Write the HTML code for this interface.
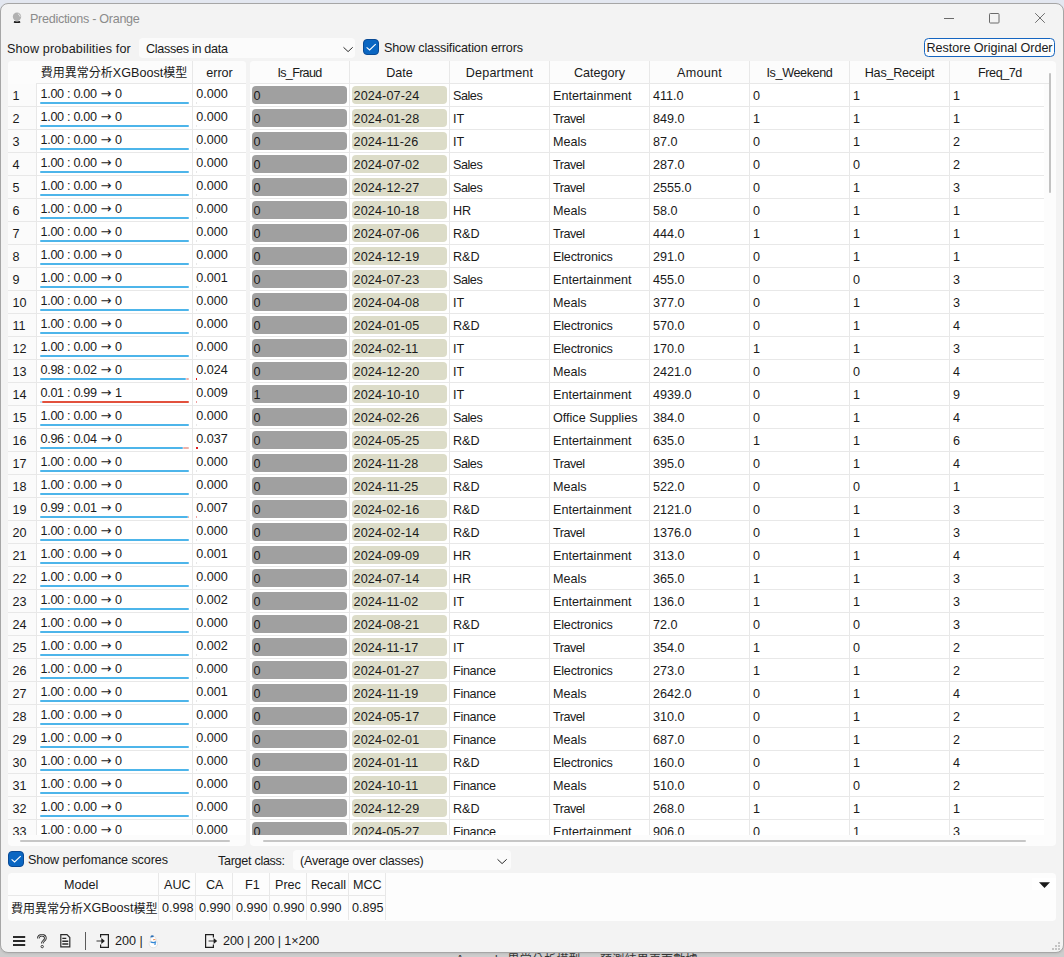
<!DOCTYPE html>
<html lang="zh-Hant"><head><meta charset="utf-8"><title>Predictions - Orange</title>
<style>
html,body{margin:0;padding:0}
body{width:1064px;height:957px;overflow:hidden;position:relative;background:#e3e7f0;
 font-family:"Liberation Sans","Noto Sans CJK TC",sans-serif;font-size:12.6px;color:#1a1a1a}
*{box-sizing:border-box}
span,div,i,b,em{white-space:nowrap}
i,b,em{font-style:normal;font-weight:normal}
.backdrop{position:absolute;left:0;top:940px;width:1064px;height:17px;background:#cdcdcd}
.win{position:absolute;left:0;top:3px;width:1064px;height:950px;background:#f3f3f3;border:1px solid #a6a6a6;border-radius:8px;box-shadow:0 1px 2px rgba(0,0,0,.08)}
.abs{position:absolute}
.title{position:absolute;left:30px;top:12px;color:#8b8b8b;font-size:12.6px;letter-spacing:-.3px;line-height:14px}
.lbl{position:absolute;line-height:14px}
.combo{position:absolute;background:#fbfbfb;border-radius:4px;height:20px}
.cb{position:absolute;width:16px;height:16px;border-radius:4px;background:#0a66c2;border:1px solid #0a4a94}
.btn{position:absolute;left:924px;top:38px;width:131px;height:19px;border:1.5px solid #1565c0;border-radius:4.5px;background:#fdfdfd}
/* tables */
.ltable{position:absolute;left:8px;top:61px;width:238px;height:785px;background:#fcfcfc;border-radius:4px;overflow:hidden}
.rtable{position:absolute;left:250px;top:61px;width:806px;height:785px;background:#fcfcfc;border-radius:4px;overflow:hidden}
.lh{position:absolute;top:0;height:23px;border-right:1px solid #e8e8e8;border-bottom:1px solid #e8e8e8;background:#fcfcfc}
.lh span.hmodel,.lh span.herr{position:absolute;top:4.6px;line-height:14px;left:0;right:0;text-align:center}
.lr{position:absolute;left:0;width:238px;height:23px;border-bottom:1px solid #e8e8e8;background:#fbfbfb}
.idx{position:absolute;left:4.5px;top:4.6px;line-height:14px}
.pred{position:absolute;left:28px;top:0;width:157px;height:22px;padding:2.9px 0 0 3.5px;line-height:14px;background:#fff;border-left:1px solid #e8e8e8;border-right:1px solid #e8e8e8;letter-spacing:-.3px}
.err{position:absolute;left:185px;top:0;width:53px;height:22px;padding:2.9px 0 0 3.2px;line-height:14px;background:#fff}
.b0{position:absolute;left:32px;top:18px;height:2px;background:#4db5ea;border-radius:1px;z-index:2}
.b1{position:absolute;top:18px;height:2px;background:#e2513d;border-radius:1px;z-index:2}
.b0.fd{background:#a9d9f3}.b1.fd{background:#ecb1a8}
.eb{position:absolute;left:188px;top:18px;height:2px;background:#e02020;z-index:2}
.rh{position:absolute;top:0;width:100px;height:23px;border-right:1px solid #e8e8e8;border-bottom:1px solid #e8e8e8;text-align:center;line-height:14px;padding-top:4.6px;background:#fcfcfc}
.rr{position:absolute;left:0;width:794px;height:23px;border-bottom:1px solid #e8e8e8;background:#fff}
.c{position:absolute;top:0;width:100px;height:22px;border-right:1px solid #e8e8e8;line-height:14px}
.c0{left:0}.c1{left:100px}.c2{left:200px}.c3{left:300px}.c4{left:400px}.c5{left:500px}.c6{left:600px}.c7{left:700px;width:94px;border-right:none}
.c em{position:absolute;left:3px;top:4.6px}
.pill{position:absolute;left:2px;top:2px;width:95px;height:18px;border-radius:4px;padding:2.6px 0 0 1.5px;line-height:14px}
.pill.g{background:#a0a0a0}
.pill.d{background:#dcdcc8;letter-spacing:.14px}
.hsb{position:absolute;height:2px;background:#c6c6c6;border-radius:1px}
/* bottom */
.score{position:absolute;left:8px;top:873px;width:1048px;height:48px;background:#fdfdfd;border-radius:4px}
.sh{position:absolute;top:0;height:47px;border-right:1px solid #e8e8e8}
.sline{position:absolute;left:0;top:22px;height:1px;background:#e8e8e8;width:378px}
.st{position:absolute;line-height:14px}

.cj{font-size:12px;position:relative;top:.9px}
.ar{font-family:"DejaVu Sans",sans-serif;font-size:13px;line-height:10px;margin:0 .6px}
.clip{position:absolute;left:0;top:0;height:774px;overflow:hidden}

</style></head>
<body>
<div class="backdrop"></div>
<div class="win"></div>
<!-- title bar -->
<svg class="abs" style="left:12px;top:12px" width="12" height="12" viewBox="0 0 12 12"><circle cx="5" cy="4.7" r="4.2" fill="#b1b1b1"/><path d="M6.3 2.1c1 .4 1.6 1.2 1.8 2.2" fill="none" stroke="#f4f4f4" stroke-width=".9" stroke-linecap="round"/><path d="M2.2 9c1.8.5 3.8.5 5.700 0l.5 1.500c-.4.700-6.400.700-6.700 0z" fill="#1c1c1c"/></svg>
<span class="title">Predictions - Orange</span>
<svg class="abs" style="left:940px;top:8px" width="112" height="20" viewBox="0 0 112 20" fill="none" stroke="#6a6a6a" stroke-width="1"><path d="M4 10.5h10"/><rect x="49.5" y="5.5" width="9.5" height="9.5" rx=".8"/><path d="M95.2 5.200l9.600 9.600M104.800 5.200l-9.600 9.600" stroke="#707070"/></svg>
<!-- toolbar -->
<span class="lbl" style="left:7px;top:42px;letter-spacing:.16px">Show probabilities for</span>
<div class="combo" style="left:139px;top:38px;width:216px"></div>
<span class="lbl" style="left:146px;top:42px;letter-spacing:-.3px">Classes in data</span>
<svg class="abs" style="left:342px;top:45px" width="13" height="9" viewBox="0 0 13 9" fill="none" stroke="#2a2a2a" stroke-width="1"><path d="M1.5 2.3l4.6 4.3 4.6-4.3"/></svg>
<div class="cb" style="left:363px;top:39px"></div>
<svg class="abs" style="left:363px;top:39px" width="16" height="16" viewBox="0 0 16 16" fill="none" stroke="#fff" stroke-width="1.1"><path d="M3.6 8.3l3 2.7 6.1-5.9"/></svg>
<span class="lbl" style="left:384px;top:40.8px;letter-spacing:-.15px">Show classification errors</span>
<div class="btn"></div>
<span class="lbl" style="left:926.5px;top:41px;letter-spacing:-.03px">Restore Original Order</span>
<div class="ltable"><div class="clip" style="width:238px">
<div class="lh" style="left:0;width:28px;border:none"></div><div class="lh" style="left:28px;width:157px"><span class="hmodel"><span class="cj">費用異常分析</span>XGBoost<span class="cj">模型</span></span></div><div class="lh" style="left:185px;width:53px;border-right:none"><span class="herr">error</span></div>
<div class="lr" style="top:23px"><span class="idx">1</span><span class="pred">1.00 : 0.00 <span class="ar">→</span> 0</span><i class="b0" style="width:149px"></i><span class="err">0.000</span><i class="eb" style="width:1px;background:#e8e8e8"></i></div>
<div class="lr" style="top:46px"><span class="idx">2</span><span class="pred">1.00 : 0.00 <span class="ar">→</span> 0</span><i class="b0" style="width:149px"></i><span class="err">0.000</span><i class="eb" style="width:1px;background:#e8e8e8"></i></div>
<div class="lr" style="top:69px"><span class="idx">3</span><span class="pred">1.00 : 0.00 <span class="ar">→</span> 0</span><i class="b0" style="width:149px"></i><span class="err">0.000</span><i class="eb" style="width:1px;background:#e8e8e8"></i></div>
<div class="lr" style="top:92px"><span class="idx">4</span><span class="pred">1.00 : 0.00 <span class="ar">→</span> 0</span><i class="b0" style="width:149px"></i><span class="err">0.000</span><i class="eb" style="width:1px;background:#e8e8e8"></i></div>
<div class="lr" style="top:115px"><span class="idx">5</span><span class="pred">1.00 : 0.00 <span class="ar">→</span> 0</span><i class="b0" style="width:149px"></i><span class="err">0.000</span><i class="eb" style="width:1px;background:#e8e8e8"></i></div>
<div class="lr" style="top:138px"><span class="idx">6</span><span class="pred">1.00 : 0.00 <span class="ar">→</span> 0</span><i class="b0" style="width:149px"></i><span class="err">0.000</span><i class="eb" style="width:1px;background:#e8e8e8"></i></div>
<div class="lr" style="top:161px"><span class="idx">7</span><span class="pred">1.00 : 0.00 <span class="ar">→</span> 0</span><i class="b0" style="width:149px"></i><span class="err">0.000</span><i class="eb" style="width:1px;background:#e8e8e8"></i></div>
<div class="lr" style="top:184px"><span class="idx">8</span><span class="pred">1.00 : 0.00 <span class="ar">→</span> 0</span><i class="b0" style="width:149px"></i><span class="err">0.000</span><i class="eb" style="width:1px;background:#e8e8e8"></i></div>
<div class="lr" style="top:207px"><span class="idx">9</span><span class="pred">1.00 : 0.00 <span class="ar">→</span> 0</span><i class="b0" style="width:149px"></i><span class="err">0.001</span><i class="eb" style="width:1px;background:#e8e8e8"></i></div>
<div class="lr" style="top:230px"><span class="idx">10</span><span class="pred">1.00 : 0.00 <span class="ar">→</span> 0</span><i class="b0" style="width:149px"></i><span class="err">0.000</span><i class="eb" style="width:1px;background:#e8e8e8"></i></div>
<div class="lr" style="top:253px"><span class="idx">11</span><span class="pred">1.00 : 0.00 <span class="ar">→</span> 0</span><i class="b0" style="width:149px"></i><span class="err">0.000</span><i class="eb" style="width:1px;background:#e8e8e8"></i></div>
<div class="lr" style="top:276px"><span class="idx">12</span><span class="pred">1.00 : 0.00 <span class="ar">→</span> 0</span><i class="b0" style="width:149px"></i><span class="err">0.000</span><i class="eb" style="width:1px;background:#e8e8e8"></i></div>
<div class="lr" style="top:299px"><span class="idx">13</span><span class="pred">0.98 : 0.02 <span class="ar">→</span> 0</span><i class="b0" style="width:146px"></i><i class="b1 fd" style="left:178px;width:3px"></i><span class="err">0.024</span><i class="eb" style="width:1.2px"></i></div>
<div class="lr" style="top:322px"><span class="idx">14</span><span class="pred">0.01 : 0.99 <span class="ar">→</span> 1</span><i class="b0 fd" style="width:2px"></i><i class="b1" style="left:34px;width:147px"></i><span class="err">0.009</span><i class="eb" style="width:1px;background:#f0a0a0"></i></div>
<div class="lr" style="top:345px"><span class="idx">15</span><span class="pred">1.00 : 0.00 <span class="ar">→</span> 0</span><i class="b0" style="width:149px"></i><span class="err">0.000</span><i class="eb" style="width:1px;background:#e8e8e8"></i></div>
<div class="lr" style="top:368px"><span class="idx">16</span><span class="pred">0.96 : 0.04 <span class="ar">→</span> 0</span><i class="b0" style="width:143px"></i><i class="b1 fd" style="left:175px;width:6px"></i><span class="err">0.037</span><i class="eb" style="width:1.8px"></i></div>
<div class="lr" style="top:391px"><span class="idx">17</span><span class="pred">1.00 : 0.00 <span class="ar">→</span> 0</span><i class="b0" style="width:149px"></i><span class="err">0.000</span><i class="eb" style="width:1px;background:#e8e8e8"></i></div>
<div class="lr" style="top:414px"><span class="idx">18</span><span class="pred">1.00 : 0.00 <span class="ar">→</span> 0</span><i class="b0" style="width:149px"></i><span class="err">0.000</span><i class="eb" style="width:1px;background:#e8e8e8"></i></div>
<div class="lr" style="top:437px"><span class="idx">19</span><span class="pred">0.99 : 0.01 <span class="ar">→</span> 0</span><i class="b0" style="width:148px"></i><i class="b1 fd" style="left:180px;width:1px"></i><span class="err">0.007</span><i class="eb" style="width:1px;background:#f0a0a0"></i></div>
<div class="lr" style="top:460px"><span class="idx">20</span><span class="pred">1.00 : 0.00 <span class="ar">→</span> 0</span><i class="b0" style="width:149px"></i><span class="err">0.000</span><i class="eb" style="width:1px;background:#e8e8e8"></i></div>
<div class="lr" style="top:483px"><span class="idx">21</span><span class="pred">1.00 : 0.00 <span class="ar">→</span> 0</span><i class="b0" style="width:149px"></i><span class="err">0.001</span><i class="eb" style="width:1px;background:#e8e8e8"></i></div>
<div class="lr" style="top:506px"><span class="idx">22</span><span class="pred">1.00 : 0.00 <span class="ar">→</span> 0</span><i class="b0" style="width:149px"></i><span class="err">0.000</span><i class="eb" style="width:1px;background:#e8e8e8"></i></div>
<div class="lr" style="top:529px"><span class="idx">23</span><span class="pred">1.00 : 0.00 <span class="ar">→</span> 0</span><i class="b0" style="width:149px"></i><span class="err">0.002</span><i class="eb" style="width:1px;background:#e8e8e8"></i></div>
<div class="lr" style="top:552px"><span class="idx">24</span><span class="pred">1.00 : 0.00 <span class="ar">→</span> 0</span><i class="b0" style="width:149px"></i><span class="err">0.000</span><i class="eb" style="width:1px;background:#e8e8e8"></i></div>
<div class="lr" style="top:575px"><span class="idx">25</span><span class="pred">1.00 : 0.00 <span class="ar">→</span> 0</span><i class="b0" style="width:149px"></i><span class="err">0.002</span><i class="eb" style="width:1px;background:#e8e8e8"></i></div>
<div class="lr" style="top:598px"><span class="idx">26</span><span class="pred">1.00 : 0.00 <span class="ar">→</span> 0</span><i class="b0" style="width:149px"></i><span class="err">0.000</span><i class="eb" style="width:1px;background:#e8e8e8"></i></div>
<div class="lr" style="top:621px"><span class="idx">27</span><span class="pred">1.00 : 0.00 <span class="ar">→</span> 0</span><i class="b0" style="width:149px"></i><span class="err">0.001</span><i class="eb" style="width:1px;background:#e8e8e8"></i></div>
<div class="lr" style="top:644px"><span class="idx">28</span><span class="pred">1.00 : 0.00 <span class="ar">→</span> 0</span><i class="b0" style="width:149px"></i><span class="err">0.000</span><i class="eb" style="width:1px;background:#e8e8e8"></i></div>
<div class="lr" style="top:667px"><span class="idx">29</span><span class="pred">1.00 : 0.00 <span class="ar">→</span> 0</span><i class="b0" style="width:149px"></i><span class="err">0.000</span><i class="eb" style="width:1px;background:#e8e8e8"></i></div>
<div class="lr" style="top:690px"><span class="idx">30</span><span class="pred">1.00 : 0.00 <span class="ar">→</span> 0</span><i class="b0" style="width:149px"></i><span class="err">0.000</span><i class="eb" style="width:1px;background:#e8e8e8"></i></div>
<div class="lr" style="top:713px"><span class="idx">31</span><span class="pred">1.00 : 0.00 <span class="ar">→</span> 0</span><i class="b0" style="width:149px"></i><span class="err">0.000</span><i class="eb" style="width:1px;background:#e8e8e8"></i></div>
<div class="lr" style="top:736px"><span class="idx">32</span><span class="pred">1.00 : 0.00 <span class="ar">→</span> 0</span><i class="b0" style="width:149px"></i><span class="err">0.000</span><i class="eb" style="width:1px;background:#e8e8e8"></i></div>
<div class="lr" style="top:759px"><span class="idx">33</span><span class="pred">1.00 : 0.00 <span class="ar">→</span> 0</span><i class="b0" style="width:149px"></i><span class="err">0.000</span><i class="eb" style="width:1px;background:#e8e8e8"></i></div>
</div></div>
<div class="rtable"><div class="clip" style="width:806px">
<div class="rh" style="left:0px"><span style="letter-spacing:-0.7px">Is_Fraud</span></div><div class="rh" style="left:100px"><span>Date</span></div><div class="rh" style="left:200px"><span style="letter-spacing:0.16px">Department</span></div><div class="rh" style="left:300px"><span>Category</span></div><div class="rh" style="left:400px"><span style="letter-spacing:0.27px">Amount</span></div><div class="rh" style="left:500px"><span style="letter-spacing:-0.38px">Is_Weekend</span></div><div class="rh" style="left:600px"><span style="letter-spacing:-0.24px">Has_Receipt</span></div><div class="rh" style="left:700px;border-right:none"><span style="letter-spacing:-0.45px">Freq_7d</span></div>
<div class="rr" style="top:23px"><span class="c c0"><b class="pill g">0</b></span><span class="c c1"><b class="pill d">2024-07-24</b></span><span class="c c2"><em style="letter-spacing:-0.45px">Sales</em></span><span class="c c3"><em>Entertainment</em></span><span class="c c4"><em>411.0</em></span><span class="c c5"><em>0</em></span><span class="c c6"><em>1</em></span><span class="c c7"><em>1</em></span></div>
<div class="rr" style="top:46px"><span class="c c0"><b class="pill g">0</b></span><span class="c c1"><b class="pill d">2024-01-28</b></span><span class="c c2"><em>IT</em></span><span class="c c3"><em style="letter-spacing:-0.5px">Travel</em></span><span class="c c4"><em>849.0</em></span><span class="c c5"><em>1</em></span><span class="c c6"><em>1</em></span><span class="c c7"><em>1</em></span></div>
<div class="rr" style="top:69px"><span class="c c0"><b class="pill g">0</b></span><span class="c c1"><b class="pill d">2024-11-26</b></span><span class="c c2"><em>IT</em></span><span class="c c3"><em>Meals</em></span><span class="c c4"><em>87.0</em></span><span class="c c5"><em>0</em></span><span class="c c6"><em>1</em></span><span class="c c7"><em>2</em></span></div>
<div class="rr" style="top:92px"><span class="c c0"><b class="pill g">0</b></span><span class="c c1"><b class="pill d">2024-07-02</b></span><span class="c c2"><em style="letter-spacing:-0.45px">Sales</em></span><span class="c c3"><em style="letter-spacing:-0.5px">Travel</em></span><span class="c c4"><em>287.0</em></span><span class="c c5"><em>0</em></span><span class="c c6"><em>0</em></span><span class="c c7"><em>2</em></span></div>
<div class="rr" style="top:115px"><span class="c c0"><b class="pill g">0</b></span><span class="c c1"><b class="pill d">2024-12-27</b></span><span class="c c2"><em style="letter-spacing:-0.45px">Sales</em></span><span class="c c3"><em style="letter-spacing:-0.5px">Travel</em></span><span class="c c4"><em>2555.0</em></span><span class="c c5"><em>0</em></span><span class="c c6"><em>1</em></span><span class="c c7"><em>3</em></span></div>
<div class="rr" style="top:138px"><span class="c c0"><b class="pill g">0</b></span><span class="c c1"><b class="pill d">2024-10-18</b></span><span class="c c2"><em>HR</em></span><span class="c c3"><em>Meals</em></span><span class="c c4"><em>58.0</em></span><span class="c c5"><em>0</em></span><span class="c c6"><em>1</em></span><span class="c c7"><em>1</em></span></div>
<div class="rr" style="top:161px"><span class="c c0"><b class="pill g">0</b></span><span class="c c1"><b class="pill d">2024-07-06</b></span><span class="c c2"><em>R&amp;D</em></span><span class="c c3"><em style="letter-spacing:-0.5px">Travel</em></span><span class="c c4"><em>444.0</em></span><span class="c c5"><em>1</em></span><span class="c c6"><em>1</em></span><span class="c c7"><em>1</em></span></div>
<div class="rr" style="top:184px"><span class="c c0"><b class="pill g">0</b></span><span class="c c1"><b class="pill d">2024-12-19</b></span><span class="c c2"><em>R&amp;D</em></span><span class="c c3"><em style="letter-spacing:-0.18px">Electronics</em></span><span class="c c4"><em>291.0</em></span><span class="c c5"><em>0</em></span><span class="c c6"><em>1</em></span><span class="c c7"><em>1</em></span></div>
<div class="rr" style="top:207px"><span class="c c0"><b class="pill g">0</b></span><span class="c c1"><b class="pill d">2024-07-23</b></span><span class="c c2"><em style="letter-spacing:-0.45px">Sales</em></span><span class="c c3"><em>Entertainment</em></span><span class="c c4"><em>455.0</em></span><span class="c c5"><em>0</em></span><span class="c c6"><em>0</em></span><span class="c c7"><em>3</em></span></div>
<div class="rr" style="top:230px"><span class="c c0"><b class="pill g">0</b></span><span class="c c1"><b class="pill d">2024-04-08</b></span><span class="c c2"><em>IT</em></span><span class="c c3"><em>Meals</em></span><span class="c c4"><em>377.0</em></span><span class="c c5"><em>0</em></span><span class="c c6"><em>1</em></span><span class="c c7"><em>3</em></span></div>
<div class="rr" style="top:253px"><span class="c c0"><b class="pill g">0</b></span><span class="c c1"><b class="pill d">2024-01-05</b></span><span class="c c2"><em>R&amp;D</em></span><span class="c c3"><em style="letter-spacing:-0.18px">Electronics</em></span><span class="c c4"><em>570.0</em></span><span class="c c5"><em>0</em></span><span class="c c6"><em>1</em></span><span class="c c7"><em>4</em></span></div>
<div class="rr" style="top:276px"><span class="c c0"><b class="pill g">0</b></span><span class="c c1"><b class="pill d">2024-02-11</b></span><span class="c c2"><em>IT</em></span><span class="c c3"><em style="letter-spacing:-0.18px">Electronics</em></span><span class="c c4"><em>170.0</em></span><span class="c c5"><em>1</em></span><span class="c c6"><em>1</em></span><span class="c c7"><em>3</em></span></div>
<div class="rr" style="top:299px"><span class="c c0"><b class="pill g">0</b></span><span class="c c1"><b class="pill d">2024-12-20</b></span><span class="c c2"><em>IT</em></span><span class="c c3"><em>Meals</em></span><span class="c c4"><em>2421.0</em></span><span class="c c5"><em>0</em></span><span class="c c6"><em>0</em></span><span class="c c7"><em>4</em></span></div>
<div class="rr" style="top:322px"><span class="c c0"><b class="pill g">1</b></span><span class="c c1"><b class="pill d">2024-10-10</b></span><span class="c c2"><em>IT</em></span><span class="c c3"><em>Entertainment</em></span><span class="c c4"><em>4939.0</em></span><span class="c c5"><em>0</em></span><span class="c c6"><em>1</em></span><span class="c c7"><em>9</em></span></div>
<div class="rr" style="top:345px"><span class="c c0"><b class="pill g">0</b></span><span class="c c1"><b class="pill d">2024-02-26</b></span><span class="c c2"><em style="letter-spacing:-0.45px">Sales</em></span><span class="c c3"><em>Office Supplies</em></span><span class="c c4"><em>384.0</em></span><span class="c c5"><em>0</em></span><span class="c c6"><em>1</em></span><span class="c c7"><em>4</em></span></div>
<div class="rr" style="top:368px"><span class="c c0"><b class="pill g">0</b></span><span class="c c1"><b class="pill d">2024-05-25</b></span><span class="c c2"><em>R&amp;D</em></span><span class="c c3"><em>Entertainment</em></span><span class="c c4"><em>635.0</em></span><span class="c c5"><em>1</em></span><span class="c c6"><em>1</em></span><span class="c c7"><em>6</em></span></div>
<div class="rr" style="top:391px"><span class="c c0"><b class="pill g">0</b></span><span class="c c1"><b class="pill d">2024-11-28</b></span><span class="c c2"><em style="letter-spacing:-0.45px">Sales</em></span><span class="c c3"><em style="letter-spacing:-0.5px">Travel</em></span><span class="c c4"><em>395.0</em></span><span class="c c5"><em>0</em></span><span class="c c6"><em>1</em></span><span class="c c7"><em>4</em></span></div>
<div class="rr" style="top:414px"><span class="c c0"><b class="pill g">0</b></span><span class="c c1"><b class="pill d">2024-11-25</b></span><span class="c c2"><em>R&amp;D</em></span><span class="c c3"><em>Meals</em></span><span class="c c4"><em>522.0</em></span><span class="c c5"><em>0</em></span><span class="c c6"><em>0</em></span><span class="c c7"><em>1</em></span></div>
<div class="rr" style="top:437px"><span class="c c0"><b class="pill g">0</b></span><span class="c c1"><b class="pill d">2024-02-16</b></span><span class="c c2"><em>R&amp;D</em></span><span class="c c3"><em>Entertainment</em></span><span class="c c4"><em>2121.0</em></span><span class="c c5"><em>0</em></span><span class="c c6"><em>1</em></span><span class="c c7"><em>3</em></span></div>
<div class="rr" style="top:460px"><span class="c c0"><b class="pill g">0</b></span><span class="c c1"><b class="pill d">2024-02-14</b></span><span class="c c2"><em>R&amp;D</em></span><span class="c c3"><em style="letter-spacing:-0.5px">Travel</em></span><span class="c c4"><em>1376.0</em></span><span class="c c5"><em>0</em></span><span class="c c6"><em>1</em></span><span class="c c7"><em>3</em></span></div>
<div class="rr" style="top:483px"><span class="c c0"><b class="pill g">0</b></span><span class="c c1"><b class="pill d">2024-09-09</b></span><span class="c c2"><em>HR</em></span><span class="c c3"><em>Entertainment</em></span><span class="c c4"><em>313.0</em></span><span class="c c5"><em>0</em></span><span class="c c6"><em>1</em></span><span class="c c7"><em>4</em></span></div>
<div class="rr" style="top:506px"><span class="c c0"><b class="pill g">0</b></span><span class="c c1"><b class="pill d">2024-07-14</b></span><span class="c c2"><em>HR</em></span><span class="c c3"><em>Meals</em></span><span class="c c4"><em>365.0</em></span><span class="c c5"><em>1</em></span><span class="c c6"><em>1</em></span><span class="c c7"><em>3</em></span></div>
<div class="rr" style="top:529px"><span class="c c0"><b class="pill g">0</b></span><span class="c c1"><b class="pill d">2024-11-02</b></span><span class="c c2"><em>IT</em></span><span class="c c3"><em>Entertainment</em></span><span class="c c4"><em>136.0</em></span><span class="c c5"><em>1</em></span><span class="c c6"><em>1</em></span><span class="c c7"><em>3</em></span></div>
<div class="rr" style="top:552px"><span class="c c0"><b class="pill g">0</b></span><span class="c c1"><b class="pill d">2024-08-21</b></span><span class="c c2"><em>R&amp;D</em></span><span class="c c3"><em style="letter-spacing:-0.18px">Electronics</em></span><span class="c c4"><em>72.0</em></span><span class="c c5"><em>0</em></span><span class="c c6"><em>0</em></span><span class="c c7"><em>3</em></span></div>
<div class="rr" style="top:575px"><span class="c c0"><b class="pill g">0</b></span><span class="c c1"><b class="pill d">2024-11-17</b></span><span class="c c2"><em>IT</em></span><span class="c c3"><em style="letter-spacing:-0.5px">Travel</em></span><span class="c c4"><em>354.0</em></span><span class="c c5"><em>1</em></span><span class="c c6"><em>0</em></span><span class="c c7"><em>2</em></span></div>
<div class="rr" style="top:598px"><span class="c c0"><b class="pill g">0</b></span><span class="c c1"><b class="pill d">2024-01-27</b></span><span class="c c2"><em style="letter-spacing:-0.3px">Finance</em></span><span class="c c3"><em style="letter-spacing:-0.18px">Electronics</em></span><span class="c c4"><em>273.0</em></span><span class="c c5"><em>1</em></span><span class="c c6"><em>1</em></span><span class="c c7"><em>2</em></span></div>
<div class="rr" style="top:621px"><span class="c c0"><b class="pill g">0</b></span><span class="c c1"><b class="pill d">2024-11-19</b></span><span class="c c2"><em style="letter-spacing:-0.3px">Finance</em></span><span class="c c3"><em>Meals</em></span><span class="c c4"><em>2642.0</em></span><span class="c c5"><em>0</em></span><span class="c c6"><em>1</em></span><span class="c c7"><em>4</em></span></div>
<div class="rr" style="top:644px"><span class="c c0"><b class="pill g">0</b></span><span class="c c1"><b class="pill d">2024-05-17</b></span><span class="c c2"><em style="letter-spacing:-0.3px">Finance</em></span><span class="c c3"><em style="letter-spacing:-0.5px">Travel</em></span><span class="c c4"><em>310.0</em></span><span class="c c5"><em>0</em></span><span class="c c6"><em>1</em></span><span class="c c7"><em>2</em></span></div>
<div class="rr" style="top:667px"><span class="c c0"><b class="pill g">0</b></span><span class="c c1"><b class="pill d">2024-02-01</b></span><span class="c c2"><em style="letter-spacing:-0.3px">Finance</em></span><span class="c c3"><em>Meals</em></span><span class="c c4"><em>687.0</em></span><span class="c c5"><em>0</em></span><span class="c c6"><em>1</em></span><span class="c c7"><em>2</em></span></div>
<div class="rr" style="top:690px"><span class="c c0"><b class="pill g">0</b></span><span class="c c1"><b class="pill d">2024-01-11</b></span><span class="c c2"><em>R&amp;D</em></span><span class="c c3"><em style="letter-spacing:-0.18px">Electronics</em></span><span class="c c4"><em>160.0</em></span><span class="c c5"><em>0</em></span><span class="c c6"><em>1</em></span><span class="c c7"><em>4</em></span></div>
<div class="rr" style="top:713px"><span class="c c0"><b class="pill g">0</b></span><span class="c c1"><b class="pill d">2024-10-11</b></span><span class="c c2"><em style="letter-spacing:-0.3px">Finance</em></span><span class="c c3"><em>Meals</em></span><span class="c c4"><em>510.0</em></span><span class="c c5"><em>0</em></span><span class="c c6"><em>0</em></span><span class="c c7"><em>2</em></span></div>
<div class="rr" style="top:736px"><span class="c c0"><b class="pill g">0</b></span><span class="c c1"><b class="pill d">2024-12-29</b></span><span class="c c2"><em>R&amp;D</em></span><span class="c c3"><em style="letter-spacing:-0.5px">Travel</em></span><span class="c c4"><em>268.0</em></span><span class="c c5"><em>1</em></span><span class="c c6"><em>1</em></span><span class="c c7"><em>1</em></span></div>
<div class="rr" style="top:759px"><span class="c c0"><b class="pill g">0</b></span><span class="c c1"><b class="pill d">2024-05-27</b></span><span class="c c2"><em style="letter-spacing:-0.3px">Finance</em></span><span class="c c3"><em>Entertainment</em></span><span class="c c4"><em>906.0</em></span><span class="c c5"><em>0</em></span><span class="c c6"><em>1</em></span><span class="c c7"><em>3</em></span></div>
</div></div>
<!-- scrollbars -->
<div class="hsb" style="left:20px;top:840px;width:210px"></div>
<div class="hsb" style="left:263px;top:840px;width:763px"></div>
<div class="abs" style="left:1049px;top:73px;width:2px;height:120px;background:#c2c2c2;border-radius:1px"></div>
<!-- bottom controls -->
<div class="cb" style="left:7.5px;top:851px"></div>
<svg class="abs" style="left:7.5px;top:851px" width="16" height="16" viewBox="0 0 16 16" fill="none" stroke="#fff" stroke-width="1.1"><path d="M3.6 8.3l3 2.7 6.1-5.9"/></svg>
<span class="lbl" style="left:28px;top:852.6px;letter-spacing:-.1px">Show perfomance scores</span>
<span class="lbl" style="left:218px;top:854px;letter-spacing:-.3px">Target class:</span>
<div class="combo" style="left:293px;top:850px;width:218px"></div>
<span class="lbl" style="left:300px;top:854px;letter-spacing:-.23px">(Average over classes)</span>
<svg class="abs" style="left:496px;top:857px" width="13" height="9" viewBox="0 0 13 9" fill="none" stroke="#2a2a2a" stroke-width="1"><path d="M1.5 2.3l4.6 4.3 4.6-4.3"/></svg>
<div class="score">
<div class="sh" style="left:0;width:151px"></div>
<div class="sh" style="left:151px;width:37px"></div>
<div class="sh" style="left:188px;width:37px"></div>
<div class="sh" style="left:225px;width:37px"></div>
<div class="sh" style="left:262px;width:37px"></div>
<div class="sh" style="left:299px;width:42px"></div>
<div class="sh" style="left:341px;width:37px"></div>
<div class="sline"></div>
<span class="st" style="left:56px;top:5px">Model</span>
<span class="st" style="left:156px;top:5px">AUC</span>
<span class="st" style="left:198px;top:5px">CA</span>
<span class="st" style="left:237px;top:5px">F1</span>
<span class="st" style="left:267px;top:5px">Prec</span>
<span class="st" style="left:303px;top:5px">Recall</span>
<span class="st" style="left:345px;top:5px">MCC</span>
<span class="st" style="left:3px;top:28px"><span class="cj">費用異常分析</span>XGBoost<span class="cj">模型</span></span>
<span class="st" style="left:154px;top:28px">0.998</span>
<span class="st" style="left:191px;top:28px">0.990</span>
<span class="st" style="left:228px;top:28px">0.990</span>
<span class="st" style="left:265px;top:28px">0.990</span>
<span class="st" style="left:302px;top:28px">0.990</span>
<span class="st" style="left:344px;top:28px">0.895</span>
<div class="abs" style="left:1024px;top:5px;width:24px;height:12px;background:#fff"></div><svg class="abs" style="left:1030.5px;top:8.6px" width="11" height="7" viewBox="0 0 11 7"><path d="M0 .3h11L5.5 6z" fill="#1a1a1a"/></svg>
</div>
<!-- status bar -->
<svg class="abs" style="left:12px;top:934px" width="14" height="14" viewBox="0 0 14 14" stroke="#2a2a2a" stroke-width="1.9"><path d="M1 3h12.2M1 7h12.2M1 11h12.2"/></svg>
<svg class="abs" style="left:36px;top:933px" width="12" height="16" viewBox="0 0 12 16" fill="none"><path d="M2.3 5.4C2.3 3.2 3.8 2.2 5.9 2.2c2 0 3.5 1.1 3.5 3 0 2.3-3.2 2.6-3.2 5.4" stroke="#2a2a2a" stroke-width="2.6"/><path d="M2.3 5.4C2.3 3.2 3.8 2.2 5.9 2.2c2 0 3.5 1.1 3.5 3 0 2.3-3.2 2.6-3.2 5.4" stroke="#f3f3f3" stroke-width=".9" stroke-linecap="square"/><circle cx="6.2" cy="13.6" r="1.2" stroke="#2a2a2a" stroke-width=".9"/></svg>
<svg class="abs" style="left:59px;top:933px" width="13" height="16" viewBox="0 0 13 16" fill="none" stroke="#2a2a2a" stroke-width="1.2"><path d="M1.8 1.7h6.2l2.8 2.8v9.3h-9z"/><path d="M3.3 5.4h4M3.3 8.2h6M3.3 11h6" stroke-width="1.4"/></svg>
<div class="abs" style="left:85px;top:932px;width:1px;height:18px;background:#5a5a5a"></div>
<svg class="abs" style="left:95px;top:933px" width="16" height="16" viewBox="0 0 16 16" fill="none" stroke="#1f1f1f" stroke-width="1.2"><path d="M5.6 4.6V1.7h7.8v12.6H5.6v-2.9"/><path d="M1.5 8h6" stroke="#555"/><path d="M6.3 5l3.6 3-3.6 3z" fill="#1f1f1f" stroke="none"/></svg>
<span class="lbl" style="left:115px;top:934.3px">200 |</span>
<svg class="abs" style="left:146px;top:934px" width="14" height="15" viewBox="0 0 14 15" fill="none"><circle cx="7.3" cy="9.6" r="4.2" fill="#fff" stroke="#dcdcdc" stroke-width=".8"/><circle cx="7.3" cy="5.4" r="2.9" fill="#fff" stroke="#dcdcdc" stroke-width=".8"/><path d="M4.2 3.6l3.6-.6-.5-1.8-2.3.4z" fill="#2c6fb5"/><path d="M4.6 7.2c1.6 1 3.8 1 5.4 0l.2 1.3c-1.8 1-4 1-5.8 0z" fill="#2f86d6"/><path d="M8.6 8.2l1.2.3-.3 2.6-1.1-.2z" fill="#2f86d6"/><path d="M7.4 5.1l2.6.6-2.6.5z" fill="#f06a1c"/></svg>
<svg class="abs" style="left:203px;top:933px" width="16" height="16" viewBox="0 0 16 16" fill="none" stroke="#1f1f1f" stroke-width="1.2"><path d="M10.4 4.6V1.7H2.6v12.6h7.8v-2.9"/><path d="M5.6 8h6" stroke="#666" stroke-width="1.4"/><path d="M10.6 5l3.6 3-3.6 3z" fill="#1f1f1f" stroke="none"/></svg>
<span class="lbl" style="left:223px;top:934.3px;letter-spacing:-.1px">200 | 200 | 1×200</span>
<span class="abs" style="left:456px;top:953.6px;font-size:12px;color:#333;line-height:12px;letter-spacing:.2px">Anomaly 異常分析模型 — 預測結果頁面數據</span>
<svg class="abs" style="left:1051px;top:941px" width="10" height="10" viewBox="0 0 10 10" fill="#c4c4c4"><rect x="7" y="1" width="2" height="2"/><rect x="4" y="4" width="2" height="2"/><rect x="7" y="4" width="2" height="2"/><rect x="1" y="7" width="2" height="2"/><rect x="4" y="7" width="2" height="2"/><rect x="7" y="7" width="2" height="2"/></svg>
</body></html>
